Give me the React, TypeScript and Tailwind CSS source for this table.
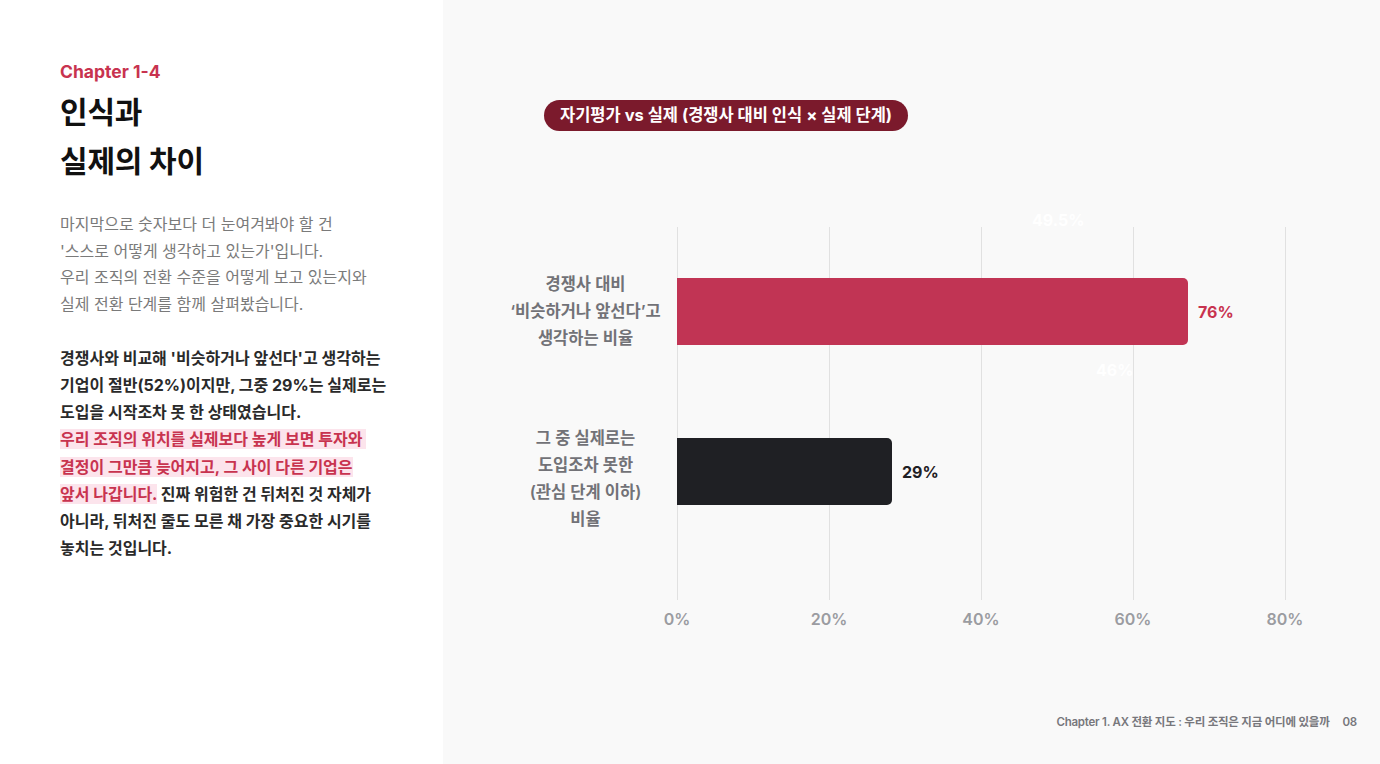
import React from "react";

export default function App() {
  const ticks = ["0%", "20%", "40%", "60%", "80%"];
  return (
    <div className="flex h-[764px] w-[1380px] overflow-hidden font-['Inter','Noto_Sans_CJK_KR',sans-serif]">
      {/* Left panel */}
      <div className="w-[443px] shrink-0 bg-white pl-[60px] pt-[60px]">
        <div className="text-[17.5px] font-bold leading-[24px] text-[#c8334f]">Chapter 1-4</div>
        <h1 className="mt-[4px] text-[30px] font-bold leading-[49px] tracking-[-0.2px] text-[#111111]">
          인식과
          <br />
          실제의 차이
        </h1>
        <p className="mt-[25px] text-[16px] leading-[26.7px] text-[#7a7a7a]">
          마지막으로 숫자보다 더 눈여겨봐야 할 건
          <br />
          '스스로 어떻게 생각하고 있는가'입니다.
          <br />
          우리 조직의 전환 수준을 어떻게 보고 있는지와
          <br />
          실제 전환 단계를 함께 살펴봤습니다.
        </p>
        <p className="mt-[27px] text-[16px] font-bold leading-[27.2px] text-[#2a2a2a]">
          경쟁사와 비교해 '비슷하거나 앞선다'고 생각하는
          <br />
          기업이 절반(52%)이지만, 그중 29%는 실제로는
          <br />
          도입을 시작조차 못 한 상태였습니다.
          <br />
          <span className="bg-[#fce4ec] text-[#c8334f] [box-decoration-break:clone]">
            우리 조직의 위치를 실제보다 높게 보면 투자와&nbsp;
            <br />
            결정이 그만큼 늦어지고, 그 사이 다른 기업은
            <br />
            앞서 나갑니다.
          </span>{" "}
          진짜 위험한 건 뒤처진 것 자체가
          <br />
          아니라, 뒤처진 줄도 모른 채 가장 중요한 시기를
          <br />
          놓치는 것입니다.
        </p>
      </div>

      {/* Right panel */}
      <div className="flex flex-1 flex-col bg-[#f9f9f9]">
        <div className="pl-[101px] pt-[100px]">
          <span className="inline-flex h-[31px] items-center rounded-full bg-[#7b1a2c] px-[16px] text-[16.5px] font-bold text-white">
            자기평가 vs 실제 (경쟁사 대비 인식 × 실제 단계)
          </span>
        </div>

        {/* Plot */}
        <div className="relative mt-[96px] h-[373px]">
          {ticks.map((t, i) => (
            <div
              key={t}
              className="absolute top-0 bottom-0 w-px bg-[#e1e1e1]"
              style={{ left: 234 + i * 152 }}
            />
          ))}
          <div className="absolute left-[589px] top-[-18px] text-[16px] font-bold leading-[22px] text-white">49.5%</div>
          <div className="absolute left-[653px] top-[132px] text-[16px] font-bold leading-[22px] text-white">46%</div>

          <div className="relative flex flex-col pt-[51px]">
            <div className="flex h-[67px] items-center pl-[51px]">
              <div className="w-[183px] shrink-0 text-center text-[16.5px] font-semibold leading-[27px] text-[#727277]">
                경쟁사 대비
                <br />
                ‘비슷하거나 앞선다’고
                <br />
                생각하는 비율
              </div>
              <div className="h-[67px] w-[511px] rounded-r-[5px] bg-[#c13454]" />
              <div className="ml-[10px] text-[16px] font-bold text-[#c8334f]">76%</div>
            </div>

            <div className="mt-[93px] flex h-[67px] items-center pl-[51px]">
              <div className="mt-[14px] w-[183px] shrink-0 text-center text-[16.5px] font-semibold leading-[27px] text-[#727277]">
                그 중 실제로는
                <br />
                도입조차 못한
                <br />
                (관심 단계 이하)
                <br />
                비율
              </div>
              <div className="h-[67px] w-[215px] rounded-r-[5px] bg-[#1f2024]" />
              <div className="ml-[10px] text-[16px] font-bold text-[#1f2024]">29%</div>
            </div>
          </div>
        </div>

        {/* Axis labels */}
        <div className="mt-[8px] flex pl-[158px]">
          {ticks.map((t) => (
            <div key={t} className="w-[152px] text-center text-[16px] font-semibold leading-[22px] text-[#9b9ca1]">
              {t}
            </div>
          ))}
        </div>

        {/* Footer */}
        <div className="mt-auto flex justify-end gap-[13px] pb-[34px] pr-[23px] text-[11.5px] font-semibold leading-[16px] tracking-[-0.02em] text-[#77777c]">
          <span>Chapter 1. AX 전환 지도 : 우리 조직은 지금 어디에 있을까</span>
          <span>08</span>
        </div>
      </div>
    </div>
  );
}
